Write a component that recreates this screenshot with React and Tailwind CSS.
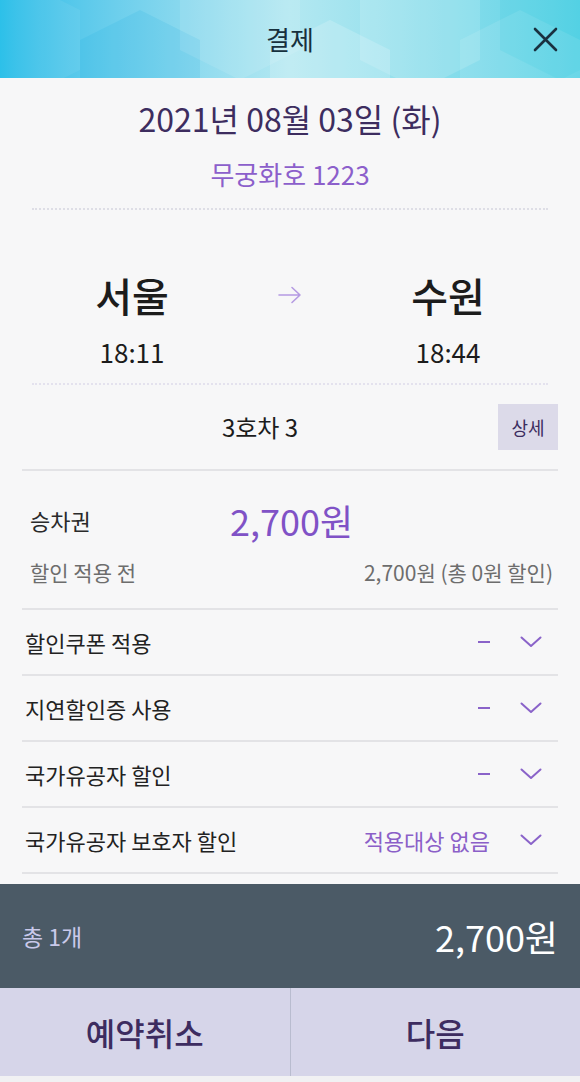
const rows = [
  { label: '할인쿠폰 적용', value: null },
  { label: '지연할인증 사용', value: null },
  { label: '국가유공자 할인', value: null },
  { label: '국가유공자 보호자 할인', value: '적용대상 없음' },
];

function Chevron() {
  return (
    <svg width="22" height="12" viewBox="0 0 22 12" fill="none">
      <path d="M1.5 1.5 L11 10 L20.5 1.5" stroke="#8a63c9" strokeWidth="2" strokeLinecap="round" strokeLinejoin="round" />
    </svg>
  );
}

function HeaderPattern() {
  return (
    <svg className="absolute inset-0 h-full w-full" viewBox="0 0 580 78" preserveAspectRatio="none">
      <polygon points="20,-20 80,10 80,70 20,100 -40,70 -40,10" fill="#ffffff" opacity="0.06" />
      <polygon points="140,10 200,40 200,100 140,130 80,100 80,40" fill="#0aa8dc" opacity="0.12" />
      <polygon points="240,-40 300,-10 300,50 240,80 180,50 180,-10" fill="#ffffff" opacity="0.1" />
      <polygon points="330,20 390,50 390,110 330,140 270,110 270,50" fill="#ffffff" opacity="0.18" />
      <polygon points="420,-30 480,0 480,60 420,90 360,60 360,0" fill="#ffffff" opacity="0.14" />
      <polygon points="520,10 580,40 580,100 520,130 460,100 460,40" fill="#ffffff" opacity="0.1" />
      <polygon points="560,-40 620,-10 620,50 560,80 500,50 500,-10" fill="#2cc6e0" opacity="0.15" />
    </svg>
  );
}

export default function App() {
  return (
    <div className="flex min-h-[1082px] w-[580px] flex-col bg-[#f7f7f8] font-['Noto_Sans_CJK_KR','Noto_Sans',sans-serif]">
      {/* header */}
      <div className="relative flex h-[78px] items-center justify-center overflow-hidden bg-linear-to-r from-[#1fbde8] via-[#b3e8f1] to-[#5ad3e6]">
        <HeaderPattern />
        <span className="relative text-[26px] leading-none text-[#17303d]">결제</span>
        <button className="absolute right-[22px] top-[27px]">
          <svg width="25" height="25" viewBox="0 0 25 25" fill="none">
            <path d="M2 2 L23 23 M23 2 L2 23" stroke="#1a3140" strokeWidth="2.6" strokeLinecap="round" />
          </svg>
        </button>
      </div>

      <main className="flex flex-1 flex-col">
        <div className="mt-[22px] h-[36px] text-center text-[32px] leading-[36px] text-[#3d2d5f]">2021년 08월 03일 (화)</div>
        <div className="mt-[21px] h-[34px] text-center text-[26px] leading-[34px] text-[#8c5fcb]">무궁화호 1223</div>
        <div className="mx-[32px] mt-[17px] border-t-2 border-dotted border-[#dedee6]" />

        <div className="mt-[61px] flex justify-center">
          <div className="flex w-[160px] flex-col items-center">
            <span className="h-[48px] text-[40px] font-medium leading-[48px] text-[#1c1c1c]">서울</span>
            <span className="mt-[17px] h-[32px] text-[26px] leading-[32px] text-[#1c1c1c]">18:11</span>
          </div>
          <div className="flex h-[48px] w-[156px] items-center justify-center">
            <svg width="24" height="18" viewBox="0 0 24 18" fill="none">
              <path d="M1 9 H22 M14 1.5 L22 9 L14 16.5" stroke="#b59be2" strokeWidth="1.6" strokeLinecap="round" strokeLinejoin="round" />
            </svg>
          </div>
          <div className="flex w-[160px] flex-col items-center">
            <span className="h-[48px] text-[40px] font-medium leading-[48px] text-[#1c1c1c]">수원</span>
            <span className="mt-[17px] h-[32px] text-[26px] leading-[32px] text-[#1c1c1c]">18:44</span>
          </div>
        </div>
        <div className="mx-[32px] mt-[15px] border-t-2 border-dotted border-[#e4e2ee]" />

        <div className="mx-[22px] mt-[19px] flex items-center">
          <div className="flex-1 text-center text-[24px] leading-none text-[#1c1c1c]">3호차 3</div>
          <button className="h-[46px] w-[60px] bg-[#dcdae9] text-[18px] text-[#3d2d5f]">상세</button>
        </div>
        <div className="mx-[22px] mt-[19px] border-t-2 border-[#e3e3e6]" />

        <div className="mx-[22px] mt-[29px] flex h-[40px] items-center px-[8px]">
          <span className="w-[200px] text-[22px] text-[#2a2a2a]">승차권</span>
          <span className="text-[36px] leading-none text-[#8052c6]">2,700원</span>
        </div>
        <div className="mx-[22px] mt-[19px] flex h-[28px] items-center justify-between pl-[8px] pr-[5px] text-[21px] text-[#6d6d6d]">
          <span>할인 적용 전</span>
          <span>2,700원 (총 0원 할인)</span>
        </div>
        <div className="mx-[22px] mt-[21px] border-t-2 border-[#e3e3e6]" />

        {rows.map((row) => (
          <div key={row.label} className="mx-[22px] flex h-[66px] items-center border-b-2 border-[#e3e3e6] pl-[3px]">
            <span className="flex-1 text-[22px] text-[#222222]">{row.label}</span>
            {row.value ? (
              <span className="mr-[30px] text-[22px] text-[#8b5fc8]">{row.value}</span>
            ) : (
              <div className="mr-[30px] h-[2px] w-[12px] bg-[#8a63c9]" />
            )}
            <div className="mr-[16px]">
              <Chevron />
            </div>
          </div>
        ))}
      </main>

      {/* total */}
      <div className="flex h-[104px] items-center justify-between bg-[#4b5a66] px-[22px]">
        <span className="text-[23px] text-[#c9c9ea]">총 1개</span>
        <span className="text-[36px] text-white">2,700원</span>
      </div>
      <div className="flex h-[88px] bg-[#d6d5e9]">
        <button className="flex-1 border-r border-[#b9bccf] text-[32px] font-medium text-[#3d2c60]">예약취소</button>
        <button className="flex-1 text-[32px] font-medium text-[#3d2c60]">다음</button>
      </div>
      <div className="h-[6px] bg-[#f1f1f3]" />
    </div>
  );
}
